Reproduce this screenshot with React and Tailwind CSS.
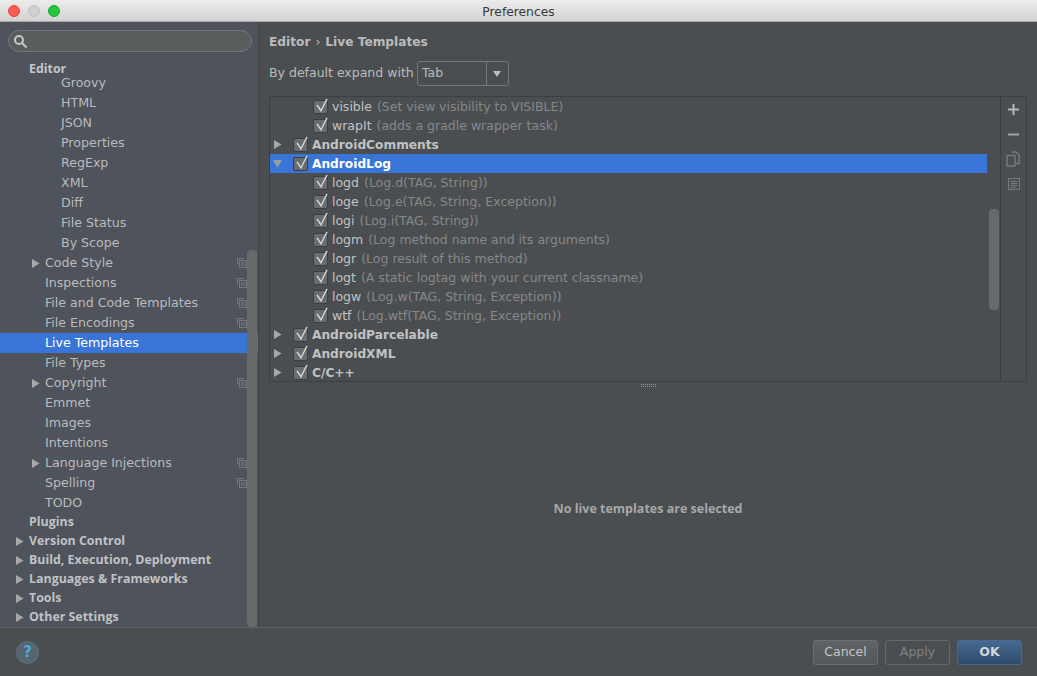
import React from "react";

const font = { fontFamily: '"DejaVu Sans", sans-serif' };
const boldFont = { fontFamily: '"Open Sans", sans-serif' };

function Arrow({ open, className = "" }) {
    return (
        <svg width="9" height="9" viewBox="0 0 9 9" className={className}>
            {open ? <path d="M0 1h9L4.5 8.5z" fill="#9a9c9e" /> : <path d="M1 0l7.5 4.5L1 9z" fill="#a6a8aa" />}
        </svg>
    );
}

function CopyMark() {
    return (
        <svg width="10" height="10" viewBox="0 0 10 10" fill="none" stroke="#74787e" strokeWidth="1">
            <path d="M.5 7V.5H7" />
            <rect x="2.5" y="2.5" width="7" height="7" />
            <path d="M4 5h4M4 7h4" />
        </svg>
    );
}

function Check() {
    return (
        <span className="relative block h-[14px] w-[15px] shrink-0 rounded-[2px] border border-[#3c3f41] bg-[#6a6d6f]">
            <svg width="17" height="17" viewBox="0 0 17 17" className="absolute left-[0px] top-[-4px]" fill="none">
                <path d="M3 8l4 6 6-12" stroke="#2f3133" strokeWidth="1" transform="translate(0 1)" />
                <path d="M3 8l4 6 6-12" stroke="#d4d6d8" strokeWidth="1.6" />
            </svg>
        </span>
    );
}

// sidebar rows: indent is the left padding of the label
const sideRows = [
    { t: "HTML" }, { t: "JSON" }, { t: "Properties" }, { t: "RegExp" }, { t: "XML" }, { t: "Diff" },
    { t: "File Status" }, { t: "By Scope" },
];
const sideRows2 = [
    { t: "Code Style", arrow: true, mark: true },
    { t: "Inspections", mark: true },
    { t: "File and Code Templates", mark: true },
    { t: "File Encodings", mark: true },
    { t: "Live Templates", selected: true },
    { t: "File Types" },
    { t: "Copyright", arrow: true, mark: true },
    { t: "Emmet" },
    { t: "Images" },
    { t: "Intentions" },
    { t: "Language Injections", arrow: true, mark: true },
    { t: "Spelling", mark: true },
    { t: "TODO" },
];
const topRows = [
    { t: "Plugins" },
    { t: "Version Control", arrow: true },
    { t: "Build, Execution, Deployment", arrow: true },
    { t: "Languages & Frameworks", arrow: true },
    { t: "Tools", arrow: true },
    { t: "Other Settings", arrow: true },
];

const treeRows = [
    { name: "visible", desc: "(Set view visibility to VISIBLE)", child: true },
    { name: "wrapIt", desc: "(adds a gradle wrapper task)", child: true },
    { name: "AndroidComments" },
    { name: "AndroidLog", selected: true, open: true },
    { name: "logd", desc: "(Log.d(TAG, String))", child: true },
    { name: "loge", desc: "(Log.e(TAG, String, Exception))", child: true },
    { name: "logi", desc: "(Log.i(TAG, String))", child: true },
    { name: "logm", desc: "(Log method name and its arguments)", child: true },
    { name: "logr", desc: "(Log result of this method)", child: true },
    { name: "logt", desc: "(A static logtag with your current classname)", child: true },
    { name: "logw", desc: "(Log.w(TAG, String, Exception))", child: true },
    { name: "wtf", desc: "(Log.wtf(TAG, String, Exception))", child: true },
    { name: "AndroidParcelable" },
    { name: "AndroidXML" },
    { name: "C/C++" },
];

function SideRow({ row }) {
    return (
        <div className={`flex h-5 items-center pr-[11px] text-[12.6px] ${row.selected ? "bg-[#3875d7] text-white" : "text-[#bbbbbb]"}`}>
            <span className="flex w-[45px] shrink-0 justify-end pr-[5px]">{row.arrow && <Arrow />}</span>
            <span className="flex-1 whitespace-nowrap">{row.t}</span>
            {row.mark && <CopyMark />}
        </div>
    );
}

function TreeRow({ row }) {
    return (
        <div className={`flex h-[19px] w-[717px] items-center ${row.selected ? "bg-[#3875d7]" : ""}`}>
            <span className="flex w-[16px] shrink-0 justify-end pr-[4px]">
                {!row.child && <Arrow open={row.open} />}
            </span>
            <span className={row.child ? "ml-[27px]" : "ml-[7px]"}><Check /></span>
            <span className={`ml-[4px] whitespace-nowrap pt-[2px] ${row.child ? "text-[12.5px]" : "text-[12.2px] font-bold"} ${row.selected ? "text-white" : "text-[#c0c2c4]"}`}>
                {row.name}
            </span>
            {row.desc && <span className="ml-[5px] whitespace-nowrap pt-[2px] text-[12.5px] text-[#85888a]">{row.desc}</span>}
        </div>
    );
}

export default function App() {
    return (
        <div style={font} className="flex h-[676px] w-[1037px] flex-col overflow-hidden bg-[#4b4e50]">
            {/* title bar */}
            <div className="flex h-[22px] shrink-0 items-center border-b border-[#a8a8a8] bg-gradient-to-b from-[#ececec] to-[#d3d3d3] pl-2">
                <div className="flex gap-2">
                    <span className="h-3 w-3 rounded-full border border-[#e2463f] bg-[#fb5b55]" />
                    <span className="h-3 w-3 rounded-full border border-[#c0c0c0] bg-[#d0d0d0]" />
                    <span className="h-3 w-3 rounded-full border border-[#14ae2d] bg-[#25c73c]" />
                </div>
                <span className="flex-1 pr-[60px] pt-[3px] text-center text-[12.3px] text-[#3a3a3a]">Preferences</span>
            </div>

            <div className="flex min-h-0 flex-1">
                {/* sidebar */}
                <div className="relative h-[605px] w-[259px] shrink-0 overflow-hidden border-r border-[#414345] bg-[#4e535c]">
                    <div className="px-2 pt-[8px]">
                        <div className="flex h-[22px] w-[244px] items-center rounded-full border border-[#74777a] bg-[#5a5d5e] pl-[4px]">
                            <svg width="15" height="15" viewBox="0 0 15 15" fill="none" stroke="#c4c6c8" strokeWidth="2">
                                <circle cx="6" cy="6" r="4" />
                                <path d="M9 9l4.5 4.5" />
                            </svg>
                        </div>
                    </div>
                    <div style={boldFont} className="mt-[10px] flex h-[14px] items-center pl-[29px] text-[12.4px] font-bold text-[#c4c6c8]">Editor</div>
                    <div className="h-[17px] pl-[61px] text-[12.6px] leading-[14px] text-[#bbbbbb]">Groovy</div>
                    <div>
                        {sideRows.map((r) => (
                            <div key={r.t} className="flex h-5 items-center pl-[61px] text-[12.6px] text-[#bbbbbb]">{r.t}</div>
                        ))}
                    </div>
                    {sideRows2.map((r) => <SideRow key={r.t} row={r} />)}
                    <div style={boldFont} className="font-bold">
                        {topRows.map((r) => (
                            <div key={r.t} className="flex h-[19px] items-center text-[12.4px] text-[#c0c2c4]">
                                <span className="flex w-[29px] shrink-0 justify-end pr-[5px] pl-[15px]">{r.arrow && <Arrow />}</span>
                                <span className="whitespace-nowrap">{r.t}</span>
                            </div>
                        ))}
                    </div>
                    {/* scrollbar lies over the list */}
                    <div className="absolute left-[247px] top-[228px] h-[377px] w-[10px] rounded-sm bg-[#67696b]" />
                </div>

                {/* right panel */}
                <div className="flex min-w-0 flex-1 flex-col px-[10px] pt-[12px]">
                    <div className="flex h-4 items-center text-[12.2px] font-bold text-[#bbbbbb]">
                        Editor<span className="mx-[5px] font-normal">›</span>Live Templates
                    </div>
                    <div className="mt-[11px] flex items-center text-[12.5px] text-[#bbbbbb]">
                        <span className="w-[148px] shrink-0 whitespace-nowrap">By default expand with</span>
                        <div className="flex h-[25px] w-[92px] items-center rounded-[3px] border border-[#75787a]">
                            <span className="flex-1 pl-[4px]">Tab</span>
                            <span className="flex h-full w-[22px] items-center justify-center border-l border-[#75787a]">
                                <svg width="9" height="6" viewBox="0 0 9 6"><path d="M0 0h8L4 6z" fill="#bbbbbb" /></svg>
                            </span>
                        </div>
                    </div>

                    {/* tree */}
                    <div className="relative mt-[10px] flex h-[286px] w-[758px] border border-[#3c3e40]">
                        <div className="h-[284px] w-[730px] overflow-hidden">
                            {treeRows.map((r) => <TreeRow key={r.name} row={r} />)}
                        </div>
                        <div className="absolute left-[719px] top-[112px] h-[101px] w-[10px] rounded-sm bg-[#67696b]" />
                        <div className="flex w-[26px] flex-col items-center gap-[14px] border-l border-[#3c3e40] pt-[7px]">
                            <svg width="11" height="11" viewBox="0 0 11 11"><path d="M4.5 0h2v4.5H11v2H6.5V11h-2V6.5H0v-2h4.5z" fill="#b4b6b8" /></svg>
                            <svg width="11" height="11" viewBox="0 0 11 11"><path d="M0 4.5h11v2H0z" fill="#a0a2a4" /></svg>
                            <svg width="15" height="16" viewBox="0 0 15 16" fill="none" stroke="#77797b" strokeWidth="1.5" className="-mt-[3px]">
                                <path d="M6 1h4l3 3v8.5H10" />
                                <rect x="1" y="4.5" width="8" height="10.5" />
                            </svg>
                            <svg width="12" height="12" viewBox="0 0 12 12" fill="none" stroke="#77797b" strokeWidth="1" className="-mt-[3px]">
                                <rect x=".5" y=".5" width="11" height="11" />
                                <path d="M2.5 3.5h7M2.5 5.5h7M2.5 7.5h7M2.5 9.5h5" />
                            </svg>
                        </div>
                    </div>

                    {/* splitter grip */}
                    <div className="mt-[2px] flex h-[3px] w-[758px] justify-center">
                        <div className="h-[3px] w-[15px] border-y border-dotted border-[#909294]" />
                    </div>

                    <div style={boldFont} className="flex flex-1 items-center justify-center text-[12.5px] font-bold text-[#a6a8aa]">
                        <span className="mt-[4px]">No live templates are selected</span>
                    </div>
                </div>
            </div>

            {/* bottom bar */}
            <div className="flex h-[49px] shrink-0 items-center border-t border-[#5f6163] pl-[16px] pr-[15px]">
                <div className="flex h-[23px] w-[23px] items-center justify-center rounded-full border border-[#5f6f7b] bg-[#54666f] text-[15px] font-bold text-[#52a8dc]">?</div>
                <div className="ml-auto flex gap-[7px] text-[12.5px]">
                    <button className="h-[25px] w-[65px] rounded-[3px] border border-[#6b6e70] bg-gradient-to-b from-[#5f6365] to-[#55585a] text-[#c4c6c8]">Cancel</button>
                    <button className="h-[25px] w-[65px] rounded-[3px] border border-[#66696b] text-[#7f8284]">Apply</button>
                    <button className="h-[25px] w-[65px] rounded-[3px] border border-[#496a8c] bg-gradient-to-b from-[#456a91] to-[#2f4a6b] font-bold text-[#d4d6d8]">OK</button>
                </div>
            </div>
        </div>
    );
}
